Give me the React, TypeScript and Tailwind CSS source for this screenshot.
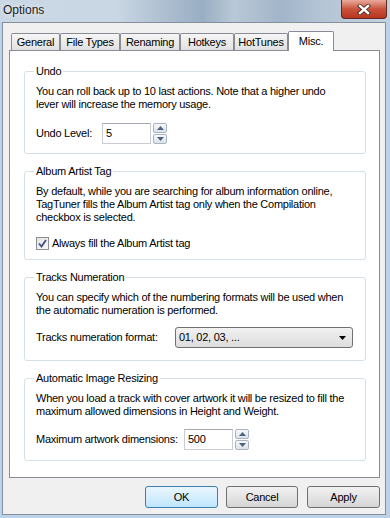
import React from "react";

const tabs = [
  { label: "General", w: "w-[49px]" },
  { label: "File Types", w: "w-[60px]" },
  { label: "Renaming", w: "w-[60px]" },
  { label: "Hotkeys", w: "w-[54px]" },
  { label: "HotTunes", w: "w-[54px]" },
];

function Spin() {
  return (
    <div className="ml-[2px] flex h-[21px] w-[14px] flex-col gap-[1px]">
      <div className="flex flex-1 items-center justify-center rounded-[2px] border border-[#a9b3c0] bg-gradient-to-b from-[#f7f8fa] to-[#dde3ea]">
        <svg width="7" height="4" viewBox="0 0 7 4">
          <path d="M0 4 L3.5 0 L7 4Z" fill="#4d6185" />
        </svg>
      </div>
      <div className="flex flex-1 items-center justify-center rounded-[2px] border border-[#a9b3c0] bg-gradient-to-b from-[#f7f8fa] to-[#dde3ea]">
        <svg width="7" height="4" viewBox="0 0 7 4">
          <path d="M0 0 L3.5 4 L7 0Z" fill="#4d6185" />
        </svg>
      </div>
    </div>
  );
}

function NumberBox({ value }: { value: string }) {
  return (
    <div className="flex items-center">
      <div className="flex h-[21px] w-[49px] items-center border border-[#c9ccd3] border-t-[#a5a8b0] bg-white pl-[3px]">
        {value}
      </div>
      <Spin />
    </div>
  );
}

function Group({ title, children }: { title: string; children: React.ReactNode }) {
  return (
    <fieldset className="rounded-[3px] border border-[#d5dfe5] px-[11px] pt-[7px]">
      <legend className="-ml-[2px] px-[2px] leading-[13px]">{title}</legend>
      {children}
    </fieldset>
  );
}

export default function App() {
  return (
    <div className="relative flex h-[518px] w-[390px] flex-col overflow-hidden whitespace-nowrap bg-[#bcd2ea] font-['Liberation_Sans',Arial,sans-serif] text-[11px] leading-[13px] tracking-[-0.25px] text-black">
      {/* title bar */}
      <div className="flex h-[22px] shrink-0 items-start justify-between bg-[linear-gradient(90deg,#cad7e4_0%,#c9d6e3_30%,#aebfd1_42%,#9aaec3_52%,#b9c8d7_60%,#a2b5c9_72%,#b4c4d5_82%,#c3d2e1_100%)]">
        <span className="pl-[3px] pt-[3px] text-[12px] leading-[14px] tracking-normal text-[#1c1c1c] [text-shadow:0_0_6px_#ffffff]">
          Options
        </span>
        <div className="mr-[3px] flex h-[19px] w-[46px] items-center justify-center rounded-b-[4px] border border-t-0 border-[#5e2a22] bg-gradient-to-b from-[#e9a99a] via-[#c8533c] to-[#b8341f]">
          <svg width="14" height="11" viewBox="0 0 14 11">
            <path d="M3 2 L11 9 M11 2 L3 9" stroke="#4a2a26" strokeWidth="4.2" strokeLinecap="square" />
            <path d="M3 2 L11 9 M11 2 L3 9" stroke="#ffffff" strokeWidth="2.4" strokeLinecap="square" />
          </svg>
        </div>
      </div>

      <div className="flex flex-1 flex-col pb-[3px] pl-[2px] pr-[4px]">
        <div className="flex h-full flex-col border border-[#85909c] bg-[#f0f0f0] pb-[6px] pl-[6px] pr-[5px] pt-[8px]">
          {/* tabs */}
          <div className="relative z-10 -mb-[1px] flex h-[20px] shrink-0 items-end pl-[2px]">
            {tabs.map((t) => (
              <div
                key={t.label}
                className={`${t.w} mb-[1px] flex h-[17px] items-center justify-center rounded-t-[2px] border border-b-0 border-[#898c95] bg-gradient-to-b from-[#f6f6f6] to-[#e1e1e1] pt-[1px]`}
              >
                {t.label}
              </div>
            ))}
            <div className="flex h-[20px] w-[46px] items-start justify-center rounded-t-[2px] border border-b-0 border-[#898c95] bg-white pt-[3px]">
              Misc.
            </div>
          </div>

          {/* panel */}
          <div className="flex min-h-0 flex-1 flex-col gap-[11px] border border-[#898c95] bg-white pl-[14px] pr-[13px] pt-[14px]">
            <Group title="Undo">
              <div className="pb-[9px]">
                <p>
                  You can roll back up to 10 last actions. Note that a higher undo
                  <br />
                  lever will increase the memory usage.
                </p>
                <div className="mt-[12px] flex items-center">
                  <span className="w-[66px]">Undo Level:</span>
                  <NumberBox value="5" />
                </div>
              </div>
            </Group>

            <Group title="Album Artist Tag">
              <div className="pb-[9px]">
                <p>
                  By default, while you are searching for album information online,
                  <br />
                  TagTuner fills the Album Artist tag only when the Compilation
                  <br />
                  checkbox is selected.
                </p>
                <div className="mt-[13px] flex h-[13px] items-center gap-[3px]">
                  <div className="flex h-[13px] w-[13px] items-center justify-center border border-[#8e8f8f] bg-gradient-to-br from-[#e4e4e4] to-[#f8f8f8]">
                    <svg width="9" height="9" viewBox="0 0 9 9">
                      <path d="M1 4.5 L3.5 7.5 L8 1" fill="none" stroke="#3c5186" strokeWidth="1.8" />
                    </svg>
                  </div>
                  <span>Always fill the Album Artist tag</span>
                </div>
              </div>
            </Group>

            <Group title="Tracks Numeration">
              <div className="pb-[12px]">
                <p>
                  You can specify which of the numbering formats will be used when
                  <br />
                  the automatic numeration is performed.
                </p>
                <div className="mt-[10px] flex items-center">
                  <span className="w-[139px]">Tracks numeration format:</span>
                  <div className="flex h-[21px] w-[178px] items-center justify-between rounded-[3px] border border-[#707070] bg-gradient-to-b from-[#f2f2f2] to-[#dcdcdc] pl-[3px] pr-[6px]">
                    <span>01, 02, 03, ...</span>
                    <svg width="7" height="4" viewBox="0 0 7 4">
                      <path d="M0 0 L7 0 L3.5 4Z" fill="#000000" />
                    </svg>
                  </div>
                </div>
              </div>
            </Group>

            <Group title="Automatic Image Resizing">
              <div className="pb-[10px]">
                <p>
                  When you load a track with cover artwork it will be resized to fill the
                  <br />
                  maximum allowed dimensions in Height and Weight.
                </p>
                <div className="mt-[11px] flex items-center">
                  <span className="w-[148px]">Maximum artwork dimensions:</span>
                  <NumberBox value="500" />
                </div>
              </div>
            </Group>
          </div>

          {/* buttons */}
          <div className="mt-[8px] flex h-[22px] shrink-0 justify-end">
            <button className="h-[22px] w-[73px] rounded-[3px] border border-[#3c7fb1] bg-gradient-to-b from-[#eaf6fd] to-[#bee6fd] text-[11px]">
              OK
            </button>
            <button className="ml-[8px] h-[22px] w-[72px] rounded-[3px] border border-[#707070] bg-gradient-to-b from-[#f2f2f2] to-[#d5d5d5] text-[11px]">
              Cancel
            </button>
            <button className="ml-[9px] h-[22px] w-[73px] rounded-[3px] border border-[#707070] bg-gradient-to-b from-[#f2f2f2] to-[#d5d5d5] text-[11px]">
              Apply
            </button>
          </div>
        </div>
      </div>
    </div>
  );
}
